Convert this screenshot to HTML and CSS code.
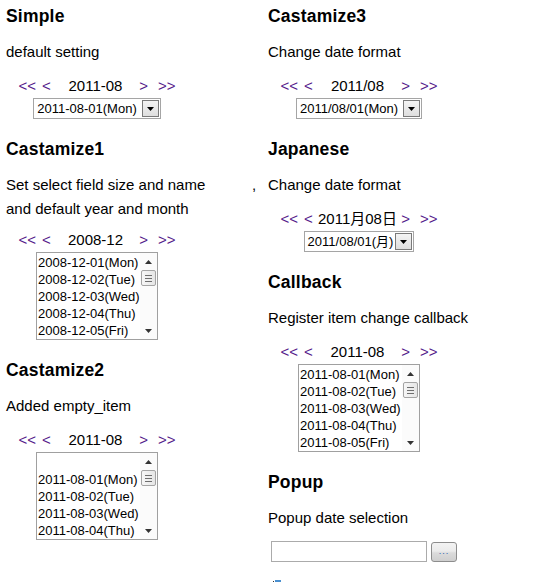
FILE: index.html
```html
<!DOCTYPE html>
<html>
<head>
<meta charset="utf-8">
<title>Calendar select demo</title>
<link rel="stylesheet" href="styles.css">
</head>
<body>
<div class="page">
  <div class="col">
    <section class="demo">
      <h2>Simple</h2>
      <p class="desc">default setting</p>
      <div class="cal">
        <div class="nav"><a class="first">&lt;&lt;</a><a class="prev">&lt;</a><span class="label">2011-08</span><a class="next">&gt;</a><a class="last">&gt;&gt;</a></div>
        <div class="select"><span class="value">2011-08-01(Mon)</span><span class="btn"><svg width="7" height="4" viewBox="0 0 7 4"><path d="M0 0h7L3.5 4z" fill="#000"/></svg></span></div>
      </div>
    </section>
    <section class="demo">
      <h2>Castamize1</h2>
      <p class="desc two">Set select field size and name<br>and default year and month</p>
      <div class="cal">
        <div class="nav"><a class="first">&lt;&lt;</a><a class="prev">&lt;</a><span class="label">2008-12</span><a class="next">&gt;</a><a class="last">&gt;&gt;</a></div>
        <div class="listbox">
          <ul class="items">
            <li>2008-12-01(Mon)</li>
            <li>2008-12-02(Tue)</li>
            <li>2008-12-03(Wed)</li>
            <li>2008-12-04(Thu)</li>
            <li>2008-12-05(Fri)</li>
          </ul>
          <div class="scrollbar">
            <span class="arrow"><svg width="7" height="4" viewBox="0 0 7 4"><path d="M3.5 0L7 4H0z" fill="#333"/></svg></span>
            <span class="thumb"><i></i><i></i><i></i></span>
            <span class="track"></span>
            <span class="arrow"><svg width="7" height="4" viewBox="0 0 7 4"><path d="M0 0h7L3.5 4z" fill="#333"/></svg></span>
          </div>
        </div>
      </div>
    </section>
    <section class="demo">
      <h2>Castamize2</h2>
      <p class="desc">Added empty_item</p>
      <div class="cal">
        <div class="nav"><a class="first">&lt;&lt;</a><a class="prev">&lt;</a><span class="label">2011-08</span><a class="next">&gt;</a><a class="last">&gt;&gt;</a></div>
        <div class="listbox">
          <ul class="items">
            <li>&nbsp;</li>
            <li>2011-08-01(Mon)</li>
            <li>2011-08-02(Tue)</li>
            <li>2011-08-03(Wed)</li>
            <li>2011-08-04(Thu)</li>
          </ul>
          <div class="scrollbar">
            <span class="arrow"><svg width="7" height="4" viewBox="0 0 7 4"><path d="M3.5 0L7 4H0z" fill="#333"/></svg></span>
            <span class="thumb"><i></i><i></i><i></i></span>
            <span class="track"></span>
            <span class="arrow"><svg width="7" height="4" viewBox="0 0 7 4"><path d="M0 0h7L3.5 4z" fill="#333"/></svg></span>
          </div>
        </div>
      </div>
    </section>
  </div>
  <div class="col">
    <section class="demo">
      <h2>Castamize3</h2>
      <p class="desc">Change date format</p>
      <div class="cal">
        <div class="nav"><a class="first">&lt;&lt;</a><a class="prev">&lt;</a><span class="label">2011/08</span><a class="next">&gt;</a><a class="last">&gt;&gt;</a></div>
        <div class="select"><span class="value">2011/08/01(Mon)</span><span class="btn"><svg width="7" height="4" viewBox="0 0 7 4"><path d="M0 0h7L3.5 4z" fill="#000"/></svg></span></div>
      </div>
    </section>
    <section class="demo">
      <h2>Japanese</h2>
      <p class="desc"><span class="stray">,</span>Change date format</p>
      <div class="cal jp">
        <div class="nav"><a class="first">&lt;&lt;</a><a class="prev">&lt;</a><span class="label">2011月08日</span><a class="next">&gt;</a><a class="last">&gt;&gt;</a></div>
        <div class="select"><span class="value">2011/08/01(月)</span><span class="btn"><svg width="7" height="4" viewBox="0 0 7 4"><path d="M0 0h7L3.5 4z" fill="#000"/></svg></span></div>
      </div>
    </section>
    <section class="demo">
      <h2>Callback</h2>
      <p class="desc">Register item change callback</p>
      <div class="cal">
        <div class="nav"><a class="first">&lt;&lt;</a><a class="prev">&lt;</a><span class="label">2011-08</span><a class="next">&gt;</a><a class="last">&gt;&gt;</a></div>
        <div class="listbox">
          <ul class="items">
            <li>2011-08-01(Mon)</li>
            <li>2011-08-02(Tue)</li>
            <li>2011-08-03(Wed)</li>
            <li>2011-08-04(Thu)</li>
            <li>2011-08-05(Fri)</li>
          </ul>
          <div class="scrollbar">
            <span class="arrow"><svg width="7" height="4" viewBox="0 0 7 4"><path d="M3.5 0L7 4H0z" fill="#333"/></svg></span>
            <span class="thumb"><i></i><i></i><i></i></span>
            <span class="track"></span>
            <span class="arrow"><svg width="7" height="4" viewBox="0 0 7 4"><path d="M0 0h7L3.5 4z" fill="#333"/></svg></span>
          </div>
        </div>
      </div>
    </section>
    <section class="demo">
      <h2>Popup</h2>
      <p class="desc">Popup date selection</p>
      <div class="popup">
        <input class="field" type="text">
        <button class="dots" type="button">...</button>
      </div>
      <div class="marker"><i class="dot"></i><i class="bar"></i></div>
    </section>
  </div>
</div>
</body>
</html>
```
FILE: styles.css
```css
html, body {
  margin: 0;
  padding: 0;
  background: #fff;
}
body {
  font-family: "Liberation Sans", Arial, "Noto Sans CJK JP", sans-serif;
  color: #000;
  font-size: 15px;
}
.page {
  display: grid;
  grid-template-columns: 262px 262px;
  padding: 6px 0 0 6px;
}
.col {
  display: flex;
  flex-direction: column;
  gap: 20px;
}
.demo {
  display: flex;
  flex-direction: column;
  align-items: flex-start;
}
h2 {
  margin: 0;
  font-size: 17.5px;
  line-height: 20px;
  font-weight: bold;
  letter-spacing: 0.2px;
}
.desc {
  margin: 16px 0 0;
  font-size: 15px;
  line-height: 20px;
  white-space: nowrap;
}
.desc.two {
  margin-top: 14px;
  line-height: 24px;
}
.stray {
  display: inline-block;
  width: 16px;
  margin-left: -16px;
}
.cal {
  width: 182px;
  margin-top: 14px;
  display: flex;
  flex-direction: column;
  align-items: center;
}
.desc.two + .cal {
  margin-top: 9px;
}
.nav {
  width: 157px;
  display: flex;
  font-size: 15px;
  line-height: 20px;
}
.nav a {
  color: #551a8b;
  cursor: pointer;
}
.nav .prev {
  margin-left: 6px;
}
.nav .label {
  flex: 1;
  text-align: center;
  padding-left: 1px;
}
.nav .last {
  margin-left: 10px;
}
.select {
  margin-top: 2px;
  box-sizing: border-box;
  height: 21px;
  display: flex;
  align-items: center;
  border: 1px solid #a5a5a5;
  background: #fff;
  font-size: 13px;
  padding-right: 1px;
}
.select .value {
  padding: 0 5px 0 3px;
  line-height: 19px;
}
.cal.jp .select .value {
  padding-right: 2px;
}
.select .btn {
  box-sizing: border-box;
  width: 17px;
  height: 17px;
  border: 1px solid #7a7a7a;
  background: linear-gradient(#f4f4f4, #dedede);
  display: flex;
  align-items: center;
  justify-content: center;
}
.listbox {
  margin-top: 2px;
  box-sizing: border-box;
  width: 122px;
  height: 88px;
  border: 1px solid #a0a0a0;
  display: flex;
  background: #fff;
}
.items {
  list-style: none;
  margin: 0;
  padding: 1px 0 0 1px;
  flex: 1;
  font-size: 13px;
  line-height: 17px;
  overflow: hidden;
  white-space: nowrap;
}
.scrollbar {
  width: 17px;
  flex: none;
  display: flex;
  flex-direction: column;
  align-items: center;
  background: #fbfbfb;
}
.scrollbar .arrow {
  height: 17px;
  width: 17px;
  display: flex;
  align-items: center;
  justify-content: center;
}
.scrollbar .track {
  flex: 1;
}
.scrollbar .thumb {
  box-sizing: border-box;
  width: 15px;
  height: 16px;
  border: 1px solid #a4a4a4;
  border-radius: 2px;
  background: linear-gradient(90deg, #f6f6f6, #e6e6e6);
  display: flex;
  flex-direction: column;
  align-items: center;
  justify-content: center;
  gap: 2px;
}
.scrollbar .thumb i {
  display: block;
  width: 7px;
  height: 1px;
  background: #6e6e6e;
}
.popup {
  margin: 13px 0 0 3px;
  display: flex;
  align-items: center;
  gap: 4px;
}
.field {
  box-sizing: border-box;
  width: 156px;
  height: 21px;
  margin: 0;
  border: 1px solid #ababab;
  padding: 0 2px;
  font: 13px "Liberation Sans", Arial, sans-serif;
  background: #fff;
}
.dots {
  box-sizing: border-box;
  width: 26px;
  height: 20px;
  margin: 0;
  padding: 0 0 3px;
  border: 1px solid #8d8d8d;
  border-radius: 3px;
  background: linear-gradient(#f3f3f3 0%, #ebebeb 45%, #dbdbdb 55%, #cfcfcf 100%);
  color: #2a5db0;
  font: 9px "Liberation Sans", Arial, sans-serif;
  line-height: 14px;
  letter-spacing: 1px;
  display: flex;
  align-items: flex-end;
  justify-content: center;
}
.marker {
  margin: 17px 0 0 5px;
  display: flex;
  align-items: flex-end;
  gap: 1px;
  height: 3px;
}
.marker .dot {
  display: block;
  width: 1px;
  height: 1px;
  background: #333;
}
.marker .bar {
  display: block;
  width: 6px;
  height: 2px;
  background: #4a90d0;
}
```
